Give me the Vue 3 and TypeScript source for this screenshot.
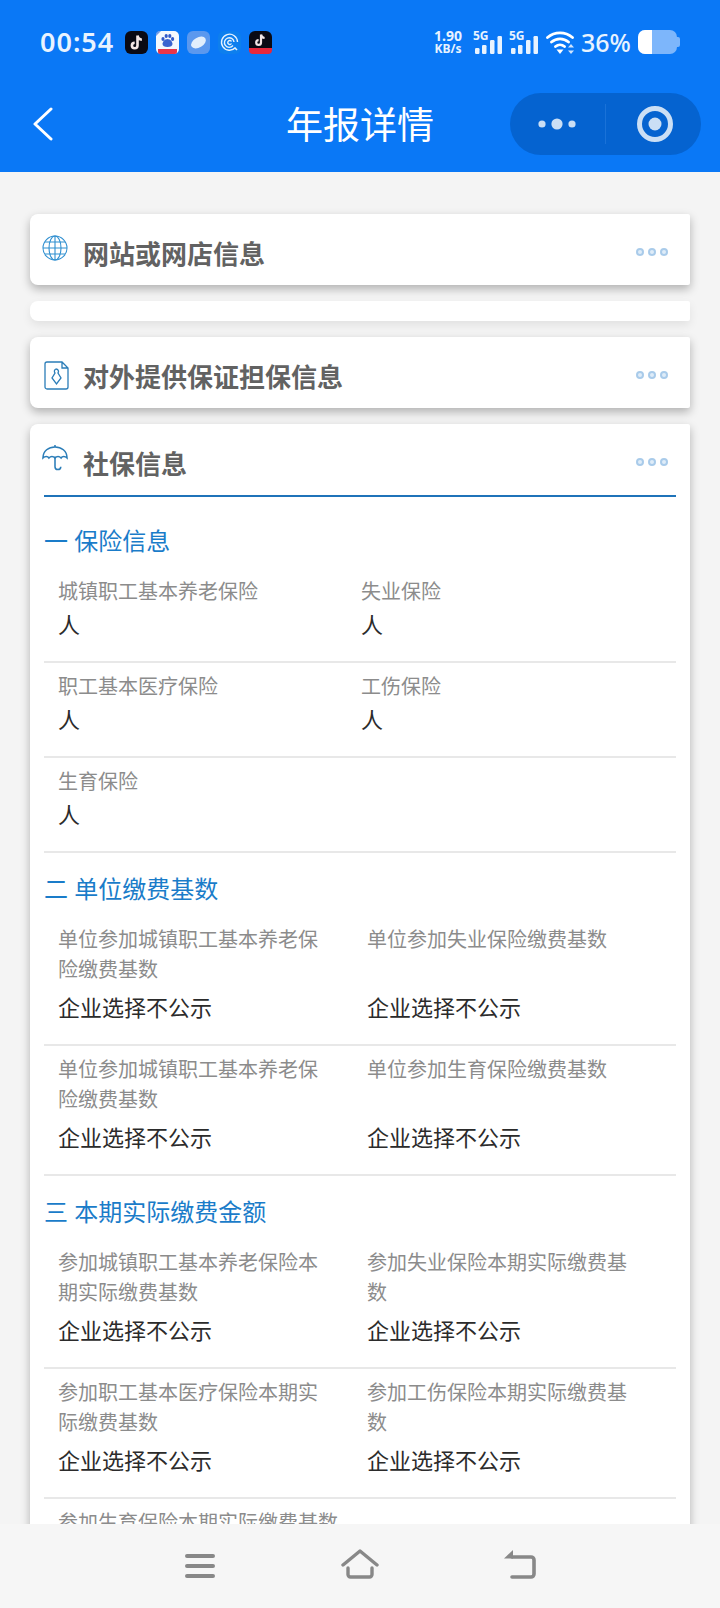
<template>
  <div class="page">
    <header class="top">
      <div class="status">
        <span class="time">00:54</span>
        <div class="apps">
          <svg class="app" viewBox="0 0 23 23">
            <rect width="23" height="23" rx="6" fill="#0a0a14" />
            <path d="M12.500 4.500v10a2.800 2.800 0 1 1-2.800-2.800M12.500 4.500c.3 2.400 1.900 4 4.400 4.200" fill="none" stroke="#f3e6e6" stroke-width="2.600" />
          </svg>
          <svg class="app" viewBox="0 0 23 23">
            <rect width="23" height="23" rx="5" fill="#f4f8fd" />
            <path d="M0 5V4a4 4 0 0 1 4-4h1z" fill="#6f9be8" />
            <ellipse cx="7" cy="8" rx="1.600" ry="2" fill="#3159c9" />
            <ellipse cx="10.200" cy="5" rx="1.600" ry="2" fill="#3159c9" />
            <ellipse cx="13.800" cy="5" rx="1.600" ry="2" fill="#3159c9" />
            <ellipse cx="16.600" cy="8" rx="1.600" ry="2" fill="#3159c9" />
            <path d="M11.500 8c3 0 5 3 5 5 0 2-2 3-5 3s-5-1-5-3c0-2 2-5 5-5z" fill="#3a63cf" />
            <path d="M2 18h19v3a2 2 0 0 1-2 2H4a2 2 0 0 1-2-2z" fill="#e8354a" />
          </svg>
          <svg class="app" viewBox="0 0 23 23">
            <rect width="23" height="23" rx="6" fill="#5b98ee" />
            <ellipse cx="11.500" cy="11.500" rx="8" ry="5" fill="#e2eefc" transform="rotate(-30 11.500 11.500)" />
          </svg>
          <svg class="app" viewBox="0 0 23 23">
            <rect width="23" height="23" rx="6" fill="#0d7fee" />
            <path d="M17.500 16.500a8 8 0 1 1 2-5.500M15 14.500a4.800 4.800 0 1 1 1-3.500M13.500 12.500a2 2 0 1 1 0-2" fill="none" stroke="#e6f2fe" stroke-width="1.400" />
            <path d="M17 17l2 2" stroke="#e6f2fe" stroke-width="1.600" />
          </svg>
          <svg class="app" viewBox="0 0 23 23">
            <rect width="23" height="23" rx="6" fill="#0a0a14" />
            <path d="M0 17h23v2a4 4 0 0 1-4 4H4a4 4 0 0 1-4-4z" fill="#e8283c" />
            <path d="M12 3.500v8a2.400 2.400 0 1 1-2.400-2.400M12 3.500c.3 2 1.600 3.300 3.600 3.500" fill="none" stroke="#f3e6e6" stroke-width="2.200" />
          </svg>
        </div>
        <div class="speed">
          <span class="speed-num">1.90</span>
          <span class="speed-unit">KB/s</span>
        </div>
        <svg v-for="n in 2" :key="n" class="signal" viewBox="0 -4 29 28">
          <text x="0" y="10" class="sig-text">5G</text>
          <rect x="2" y="18" width="4.500" height="6" rx="1.200" />
          <rect x="9" y="15" width="4.500" height="9" rx="1.200" />
          <rect x="17" y="10" width="4.500" height="14" rx="1.200" />
          <rect x="24.500" y="6" width="4.500" height="18" rx="1.200" />
        </svg>
        <svg class="wifi" viewBox="0 0 30 24">
          <path d="M1.500 7.500a19 19 0 0 1 25 0M5.500 12a13 13 0 0 1 17 0M9.500 16.500a7 7 0 0 1 9 0" fill="none" stroke="#fff" stroke-width="2.800" stroke-linecap="round" />
          <path d="M10.500 19.500h7L14 24z" fill="#fff" />
          <path d="M25 14l3 3.500h-6zM25 24l3-3.500h-6z" fill="#cfe3fd" />
        </svg>
        <span class="pct">36%</span>
        <div class="battery">
          <div class="battery-body"><div class="battery-fill"></div></div>
          <i class="battery-nub"></i>
        </div>
      </div>
      <div class="bar">
        <svg class="back" viewBox="0 0 20 34">
          <path d="M18 2L2 17l16 15" fill="none" stroke="#fff" stroke-width="3" stroke-linecap="round" stroke-linejoin="round" />
        </svg>
        <h1 class="title">年报详情</h1>
        <div class="capsule">
          <svg class="more" viewBox="0 0 40 12">
            <circle cx="5" cy="6" r="3.600" />
            <circle cx="20" cy="6" r="5.600" />
            <circle cx="35" cy="6" r="3.600" />
          </svg>
          <i class="capsule-line"></i>
          <svg class="target" viewBox="0 0 36 36">
            <circle cx="18" cy="18" r="15.500" fill="none" stroke="#cbdff5" stroke-width="5" />
            <circle cx="18" cy="18" r="6.500" fill="#cbdff5" />
          </svg>
        </div>
      </div>
    </header>

    <main class="main">
      <section class="card">
        <div class="card-head">
          <svg class="card-icon" viewBox="0 0 26 26" fill="none" stroke="#2f8fd0" stroke-width="1.100">
            <circle cx="13" cy="13" r="12" />
            <ellipse cx="13" cy="13" rx="6" ry="12" />
            <path d="M13 1v24M1 13h24M3 7h20M3 19h20" />
          </svg>
          <h2 class="card-title">网站或网店信息</h2>
          <div class="dots"><i></i><i></i><i></i></div>
        </div>
      </section>

      <div class="strip"></div>

      <section class="card">
        <div class="card-head">
          <svg class="card-icon doc" viewBox="0 0 25 29" fill="none" stroke="#2b7db8" stroke-width="1.300">
            <path d="M3 1h15l6 6v19a2 2 0 0 1-2 2H3a2 2 0 0 1-2-2V3a2 2 0 0 1 2-2zM18 1v6h6" />
            <path d="M12 8a2.500 2.500 0 0 1 2 4l3 5-4.500 6-4.500-6 3-5a2.500 2.500 0 0 1 1-4z" />
          </svg>
          <h2 class="card-title">对外提供保证担保信息</h2>
          <div class="dots"><i></i><i></i><i></i></div>
        </div>
      </section>

      <section class="card">
        <div class="card-head with-line">
          <svg class="card-icon" viewBox="0 0 27 27" fill="none" stroke="#2b7db8" stroke-width="1.600">
            <path d="M1 13.500C1 6 7 2 13.500 2S26 6 26 13.500c-2-2-5-2-6.200 0-1.800-2-4.500-2-6.300 0-1.800-2-4.500-2-6.300 0C6 11.500 3 11.500 1 13.500z" />
            <path d="M13.500 0v2M13.500 12v10.500a3 3 0 0 0 6 0" />
          </svg>
          <h2 class="card-title">社保信息</h2>
          <div class="dots"><i></i><i></i><i></i></div>
        </div>

        <div class="body">
          <template v-for="group in groups" :key="group.name">
            <h3 class="group-title">{{ group.name }}</h3>
            <div v-for="(row, i) in group.rows" :key="i" class="row" :class="{ short: group.short }">
              <div v-for="item in row" :key="item.label" class="cell">
                <div class="label">{{ item.label }}</div>
                <div class="value">{{ item.value }}</div>
              </div>
            </div>
          </template>
        </div>
      </section>
    </main>

    <nav class="nav">
      <svg class="nav-menu" viewBox="0 0 30 24">
        <path d="M2 2h26M2 12h26M2 22h26" stroke="#888" stroke-width="4" stroke-linecap="round" />
      </svg>
      <svg class="nav-home" viewBox="0 0 38 30" fill="none" stroke="#888" stroke-width="3.400" stroke-linecap="round" stroke-linejoin="round">
        <path d="M2 16L19 2l17 14" />
        <path d="M7 19v6.500a2.500 2.500 0 0 0 2.500 2.500h19a2.500 2.500 0 0 0 2.500-2.500V19" />
      </svg>
      <svg class="nav-back" viewBox="0 0 32 29">
        <path d="M0 8.500L9 0v8.500z" fill="#888" />
        <path d="M8 7h19a3 3 0 0 1 3 3v14a3 3 0 0 1-3 3H8" fill="none" stroke="#888" stroke-width="3.600" stroke-linecap="round" />
      </svg>
    </nav>
  </div>
</template>

<script setup lang="ts">
interface Item {
  label: string
  value: string
}
interface Group {
  name: string
  short?: boolean
  rows: Item[][]
}

const hidden = '企业选择不公示'
const item = (label: string, value = hidden): Item => ({ label, value })

const groups: Group[] = [
  {
    name: '一 保险信息',
    short: true,
    rows: [
      [item('城镇职工基本养老保险', '人'), item('失业保险', '人')],
      [item('职工基本医疗保险', '人'), item('工伤保险', '人')],
      [item('生育保险', '人')],
    ],
  },
  {
    name: '二 单位缴费基数',
    rows: [
      [item('单位参加城镇职工基本养老保险缴费基数'), item('单位参加失业保险缴费基数')],
      [item('单位参加城镇职工基本养老保险缴费基数'), item('单位参加生育保险缴费基数')],
    ],
  },
  {
    name: '三 本期实际缴费金额',
    rows: [
      [item('参加城镇职工基本养老保险本期实际缴费基数'), item('参加失业保险本期实际缴费基数')],
      [item('参加职工基本医疗保险本期实际缴费基数'), item('参加工伤保险本期实际缴费基数')],
      [item('参加生育保险本期实际缴费基数')],
    ],
  },
]
</script>

<style>
html,
body {
  margin: 0;
  background: #f4f4f4;
}
</style>

<style scoped>
.page {
  display: flex;
  flex-direction: column;
  height: 1608px;
  overflow: hidden;
  background: #f4f4f4;
  font-family: 'Noto Sans', 'Noto Sans CJK SC', sans-serif;
}
.top {
  flex: none;
  height: 172px;
  background: #0a78f6;
  color: #fff;
}
.status {
  display: flex;
  align-items: center;
  height: 84px;
  padding-left: 40px;
}
.time {
  width: 85px;
  font-size: 27px;
  font-weight: 600;
  letter-spacing: 1px;
  line-height: 30px;
  color: #e8f3ff;
}
.apps {
  display: flex;
  gap: 8px;
  width: 308px;
}
.app {
  width: 23px;
  height: 23px;
}
.speed {
  display: flex;
  flex-direction: column;
  align-items: center;
  width: 30px;
  margin-right: 10px;
  font-weight: 700;
  color: #e8f3ff;
}
.speed-num {
  font-size: 14px;
  line-height: 14px;
}
.speed-unit {
  font-size: 12px;
  line-height: 12px;
}
.signal {
  width: 29px;
  height: 28px;
  margin: 0 7px 4px 0;
  fill: #e8f3ff;
}
.sig-text {
  font-size: 12px;
  font-weight: 700;
}
.wifi {
  width: 30px;
  height: 24px;
  margin-left: 1px;
}
.pct {
  margin-left: 5px;
  width: 57px;
  font-size: 25px;
  font-weight: 500;
  line-height: 30px;
  color: #e8f3ff;
}
.battery {
  display: flex;
  align-items: center;
}
.battery-body {
  width: 39px;
  height: 24px;
  border-radius: 7px;
  background: #7db6fb;
  overflow: hidden;
}
.battery-fill {
  width: 36%;
  height: 100%;
  background: #fff;
}
.battery-nub {
  width: 3px;
  height: 10px;
  border-radius: 0 2px 2px 0;
  background: #7db6fb;
}
.bar {
  display: grid;
  grid-template-columns: 1fr auto 1fr;
  align-items: center;
  height: 80px;
  padding: 0 19px;
}
.back {
  width: 20px;
  height: 34px;
  margin-left: 14px;
}
.title {
  margin: 2px 0 0;
  font-size: 37px;
  font-weight: 400;
  line-height: 48px;
}
.capsule {
  justify-self: end;
  display: flex;
  align-items: center;
  width: 191px;
  height: 62px;
  border-radius: 31px;
  background: #0563d0;
}
.more {
  width: 40px;
  height: 12px;
  margin-left: 27px;
  fill: #cbdff5;
}
.capsule-line {
  width: 1px;
  height: 40px;
  margin-left: 28px;
  background: #1a72d8;
}
.target {
  width: 36px;
  height: 36px;
  margin-left: 31px;
}
.main {
  flex: 1;
  min-height: 0;
  overflow: hidden;
  display: flex;
  flex-direction: column;
  gap: 16px;
  padding: 42px 30px 0;
}
.card {
  flex: none;
  background: #fff;
  border-radius: 8px 2px 2px 8px;
  box-shadow: 0 4px 10px rgba(0, 0, 0, 0.28);
}
.strip {
  flex: none;
  height: 20px;
  background: #fff;
  border-radius: 8px 2px 2px 8px;
  box-shadow: 0 4px 10px rgba(0, 0, 0, 0.08);
}
.card-head {
  position: relative;
  display: flex;
  align-items: flex-start;
  height: 71px;
}
.card-icon {
  flex: none;
  width: 26px;
  height: 26px;
  margin: 21px 0 0 12px;
}
.card-icon.doc {
  width: 25px;
  height: 29px;
  margin: 24px -1px 0 14px;
}
.card-title {
  margin: 25px 0 0 15px;
  color: #626262;
  font-size: 26px;
  font-weight: 700;
  line-height: 30px;
}
.dots {
  display: flex;
  gap: 4px;
  margin: 34px 22px 0 auto;
}
.dots i {
  box-sizing: border-box;
  width: 8px;
  height: 8px;
  border: 2.5px solid #a9cbea;
  border-radius: 50%;
  background: #dfecf8;
}
.with-line::after {
  content: '';
  position: absolute;
  left: 14px;
  right: 14px;
  bottom: -2px;
  height: 2px;
  background: #1f73b9;
}
.body {
  padding: 29px 14px 0;
}
.group-title {
  margin: 19px 0 10px;
  color: #1a7cc9;
  font-size: 24px;
  font-weight: 400;
  line-height: 34px;
}
.group-title:first-child {
  margin-top: 0;
}
.row {
  display: grid;
  grid-template-columns: 309px 1fr;
  padding: 9px 14px 20px;
  border-bottom: 2px solid #e8e8e8;
}
.row.short {
  grid-template-columns: 303px 1fr;
}
.cell {
  display: flex;
  flex-direction: column;
  justify-content: space-between;
  max-width: 270px;
}
.cell:only-child {
  grid-column: 1 / -1;
  max-width: none;
}
.label {
  color: #8c8c8c;
  font-size: 20px;
  line-height: 30px;
}
.value {
  margin-top: 5px;
  color: #2b2b2b;
  font-size: 22px;
  line-height: 34px;
}
.short .value {
  margin-top: 0;
}
.nav {
  flex: none;
  display: flex;
  align-items: flex-start;
  height: 84px;
  padding-left: 185px;
  background: #f6f6f6;
}
.nav-menu {
  width: 30px;
  height: 24px;
  margin-top: 30px;
}
.nav-home {
  width: 38px;
  height: 30px;
  margin: 25px 0 0 126px;
}
.nav-back {
  width: 32px;
  height: 29px;
  margin: 26px 0 0 125px;
}
</style>
